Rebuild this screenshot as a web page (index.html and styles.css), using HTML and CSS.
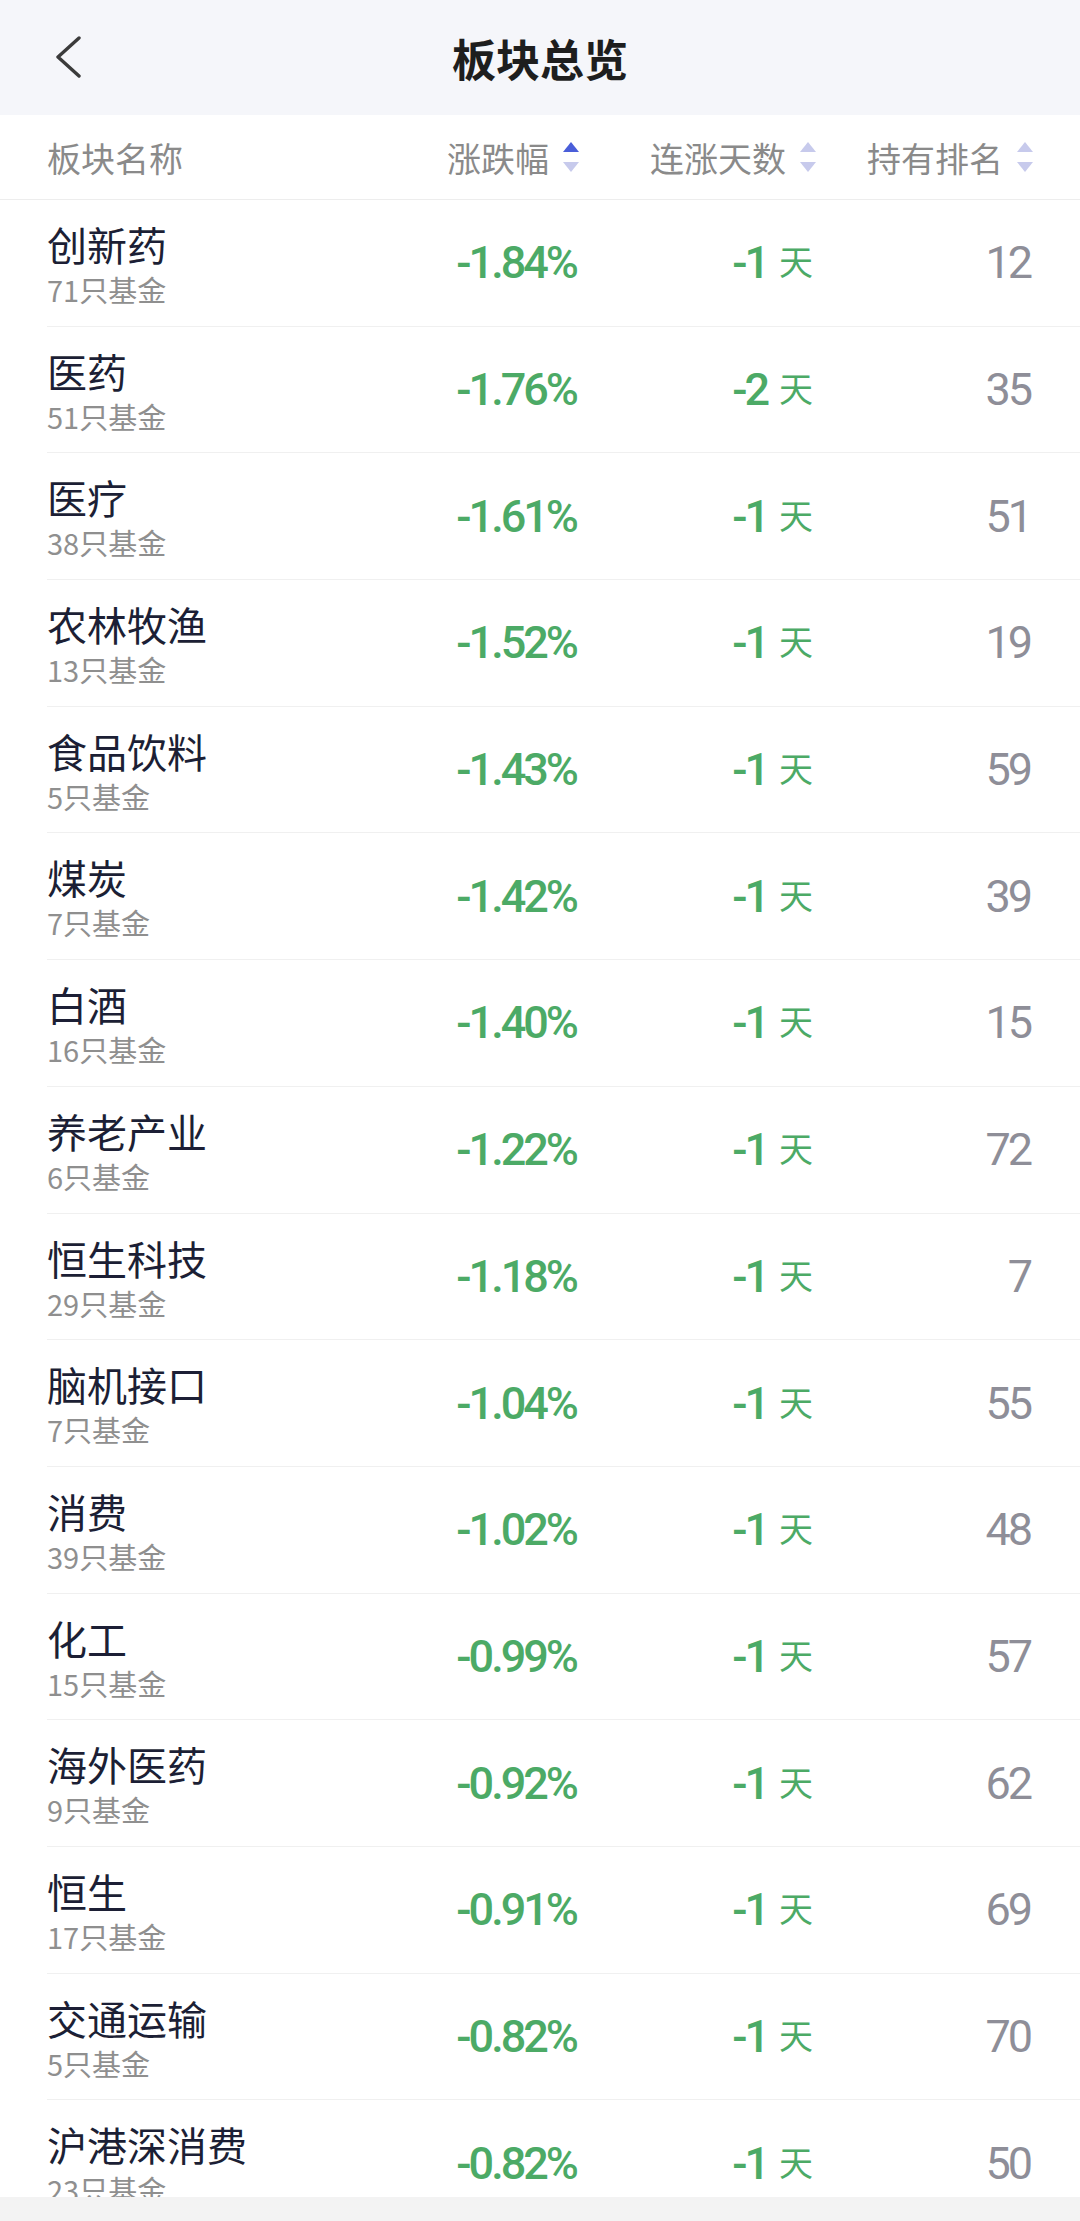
FILE: index.html
```html
<!DOCTYPE html>
<html lang="zh-CN">

<head>
    <meta charset="UTF-8">
    <meta name="viewport" content="width=device-width, initial-scale=1.0">
    <title>板块总览</title>
    <link rel="stylesheet" href="styles.css">
</head>

<body>
    <header class="topBar">
        <div class="backBtn">
            <svg width="30" height="44" viewBox="0 0 30 44">
                <polyline points="25,2 4,21 25,40" fill="none" stroke="#3b3b3b" stroke-width="3.4" stroke-linecap="round" stroke-linejoin="round" />
            </svg>
        </div>
        <h1 class="title">板块总览</h1>
        <div></div>
    </header>

    <div class="colHead">
        <span class="colName">板块名称</span>
        <span class="colSort">涨跌幅
            <svg class="sortIcon" width="16" height="30" viewBox="0 0 16 30">
                <polygon points="0,10 8,0 16,10" fill="#4a5ed9" />
                <polygon points="0,20 16,20 8,30" fill="#c7caec" />
            </svg>
        </span>
        <span class="colSort">连涨天数
            <svg class="sortIcon" width="16" height="30" viewBox="0 0 16 30">
                <polygon points="0,10 8,0 16,10" fill="#c7caec" />
                <polygon points="0,20 16,20 8,30" fill="#c7caec" />
            </svg>
        </span>
        <span class="colSort">持有排名
            <svg class="sortIcon" width="16" height="30" viewBox="0 0 16 30">
                <polygon points="0,10 8,0 16,10" fill="#c7caec" />
                <polygon points="0,20 16,20 8,30" fill="#c7caec" />
            </svg>
        </span>
    </div>

    <div class="list">
        <div class="row">
            <div class="nameCell"><div class="name">创新药</div><div class="count">71只基金</div></div>
            <div class="pct">-1.84%</div>
            <div class="days">-1<span class="dayUnit">天</span></div>
            <div class="rank">12</div>
        </div>
        <div class="row">
            <div class="nameCell"><div class="name">医药</div><div class="count">51只基金</div></div>
            <div class="pct">-1.76%</div>
            <div class="days">-2<span class="dayUnit">天</span></div>
            <div class="rank">35</div>
        </div>
        <div class="row">
            <div class="nameCell"><div class="name">医疗</div><div class="count">38只基金</div></div>
            <div class="pct">-1.61%</div>
            <div class="days">-1<span class="dayUnit">天</span></div>
            <div class="rank">51</div>
        </div>
        <div class="row">
            <div class="nameCell"><div class="name">农林牧渔</div><div class="count">13只基金</div></div>
            <div class="pct">-1.52%</div>
            <div class="days">-1<span class="dayUnit">天</span></div>
            <div class="rank">19</div>
        </div>
        <div class="row">
            <div class="nameCell"><div class="name">食品饮料</div><div class="count">5只基金</div></div>
            <div class="pct">-1.43%</div>
            <div class="days">-1<span class="dayUnit">天</span></div>
            <div class="rank">59</div>
        </div>
        <div class="row">
            <div class="nameCell"><div class="name">煤炭</div><div class="count">7只基金</div></div>
            <div class="pct">-1.42%</div>
            <div class="days">-1<span class="dayUnit">天</span></div>
            <div class="rank">39</div>
        </div>
        <div class="row">
            <div class="nameCell"><div class="name">白酒</div><div class="count">16只基金</div></div>
            <div class="pct">-1.40%</div>
            <div class="days">-1<span class="dayUnit">天</span></div>
            <div class="rank">15</div>
        </div>
        <div class="row">
            <div class="nameCell"><div class="name">养老产业</div><div class="count">6只基金</div></div>
            <div class="pct">-1.22%</div>
            <div class="days">-1<span class="dayUnit">天</span></div>
            <div class="rank">72</div>
        </div>
        <div class="row">
            <div class="nameCell"><div class="name">恒生科技</div><div class="count">29只基金</div></div>
            <div class="pct">-1.18%</div>
            <div class="days">-1<span class="dayUnit">天</span></div>
            <div class="rank">7</div>
        </div>
        <div class="row">
            <div class="nameCell"><div class="name">脑机接口</div><div class="count">7只基金</div></div>
            <div class="pct">-1.04%</div>
            <div class="days">-1<span class="dayUnit">天</span></div>
            <div class="rank">55</div>
        </div>
        <div class="row">
            <div class="nameCell"><div class="name">消费</div><div class="count">39只基金</div></div>
            <div class="pct">-1.02%</div>
            <div class="days">-1<span class="dayUnit">天</span></div>
            <div class="rank">48</div>
        </div>
        <div class="row">
            <div class="nameCell"><div class="name">化工</div><div class="count">15只基金</div></div>
            <div class="pct">-0.99%</div>
            <div class="days">-1<span class="dayUnit">天</span></div>
            <div class="rank">57</div>
        </div>
        <div class="row">
            <div class="nameCell"><div class="name">海外医药</div><div class="count">9只基金</div></div>
            <div class="pct">-0.92%</div>
            <div class="days">-1<span class="dayUnit">天</span></div>
            <div class="rank">62</div>
        </div>
        <div class="row">
            <div class="nameCell"><div class="name">恒生</div><div class="count">17只基金</div></div>
            <div class="pct">-0.91%</div>
            <div class="days">-1<span class="dayUnit">天</span></div>
            <div class="rank">69</div>
        </div>
        <div class="row">
            <div class="nameCell"><div class="name">交通运输</div><div class="count">5只基金</div></div>
            <div class="pct">-0.82%</div>
            <div class="days">-1<span class="dayUnit">天</span></div>
            <div class="rank">70</div>
        </div>
        <div class="row">
            <div class="nameCell"><div class="name">沪港深消费</div><div class="count">23只基金</div></div>
            <div class="pct">-0.82%</div>
            <div class="days">-1<span class="dayUnit">天</span></div>
            <div class="rank">50</div>
        </div>
    </div>

    <div class="bottomBar"></div>
</body>

</html>
```

FILE: styles.css
```css
* {
    box-sizing: border-box;
    margin: 0;
    padding: 0;
}

body {
    width: 1080px;
    height: 2221px;
    overflow: hidden;
    display: flex;
    flex-direction: column;
    background-color: #fff;
    font-family: "Noto Sans CJK SC", "Noto Sans", sans-serif;
}

/* top bar */
.topBar {
    height: 115px;
    flex-shrink: 0;
    background-color: #f5f6fa;
    display: grid;
    grid-template-columns: 160px 1fr 160px;
    align-items: center;
}

.backBtn {
    padding-left: 54px;
    display: flex;
    align-items: center;
}

.title {
    text-align: center;
    font-size: 44px;
    font-weight: 700;
    color: #1e1e1e;
    line-height: 60px;
}

/* column header */
.colHead {
    height: 85px;
    flex-shrink: 0;
    display: grid;
    grid-template-columns: 1fr 200px 237px 217px;
    align-items: center;
    padding: 0 47px;
    border-bottom: 1px solid #ededed;
    font-size: 34px;
    color: #8a8a8a;
}

.colSort {
    display: flex;
    justify-content: flex-end;
    align-items: center;
    gap: 14px;
}

.sortIcon {
    display: block;
}

/* list */
.list {
    flex: 1;
    overflow: hidden;
}

.row {
    height: 126.7px;
    margin-left: 47px;
    padding-right: 47px;
    border-bottom: 1px solid #f0f0f0;
    display: grid;
    grid-template-columns: 1fr 200px 237px 217px;
    align-items: center;
}

.nameCell {
    align-self: start;
    padding-top: 20px;
}

.name {
    font-size: 40px;
    line-height: 48px;
    color: #1c1f35;
}

.count {
    margin-top: 3px;
    font-size: 29px;
    line-height: 36px;
    color: #8f8f8f;
}

.pct,
.days,
.rank {
    text-align: right;
    font-family: Roboto, "Noto Sans", sans-serif;
    font-size: 45px;
    letter-spacing: -3px;
    padding-right: 3px;
}

.pct {
    font-weight: 500;
    color: #4caa66;
}

.days {
    font-weight: 500;
    color: #4caa66;
}

.dayUnit {
    font-family: "Noto Sans CJK SC", sans-serif;
    font-size: 34px;
    font-weight: 400;
    letter-spacing: 0;
    margin-left: 12px;
    vertical-align: 3px;
}

.rank {
    font-weight: 400;
    color: #8e8e98;
}

.bottomBar {
    height: 24px;
    flex-shrink: 0;
    background-color: #f3f3f3;
}
```
